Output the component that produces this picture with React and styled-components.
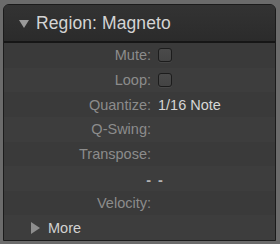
import React from "react";
import styled, { createGlobalStyle } from "styled-components";

/* -------------------------
   Data
   ------------------------- */
const rows = [
  { label: "Mute:", kind: "check" },
  { label: "Loop:", kind: "check" },
  { label: "Quantize:", value: "1/16 Note" },
  { label: "Q-Swing:" },
  { label: "Transpose:" },
  { label: "-", value: "-", dash: true },
  { label: "Velocity:" },
];

/* -------------------------
   Component
   ------------------------- */
const App = () => {
  return (
    <>
      <GlobalStyle />
      <Frame>
        <Panel>
          <Header>
            <DownArrow />
            <HeaderTitle>Region: Magneto</HeaderTitle>
          </Header>
          <Rows>
            {rows.map((r, i) => (
              <Row key={i} odd={i % 2 === 1}>
                <Label dash={r.dash}>{r.label}</Label>
                <Value dash={r.dash}>
                  {r.kind === "check" ? <Checkbox /> : r.value}
                </Value>
              </Row>
            ))}
            <MoreRow odd>
              <RightArrow />
              <MoreText>More</MoreText>
            </MoreRow>
          </Rows>
        </Panel>
      </Frame>
    </>
  );
};

/* -------------------------
   Styles
   ------------------------- */
const GlobalStyle = createGlobalStyle`
  html, body {
    margin: 0;
    padding: 0;
    background: #6b6b6b;
  }
  body {
    font-family: "Liberation Sans", Arial, sans-serif;
  }
`;

const Frame = styled.div`
  width: 280px;
  height: 244px;
  padding: 4px 4px 3px 3px;
  box-sizing: border-box;
  display: flex;
`;

const Panel = styled.div`
  flex: 1;
  display: flex;
  flex-direction: column;
  border: 1px solid #1b1b1b;
  border-radius: 6px 6px 0 0;
  overflow: hidden;
  background: #3b3b3b;
`;

const Header = styled.div`
  height: 36px;
  flex: 0 0 auto;
  display: flex;
  align-items: center;
  padding-left: 15px;
  gap: 7px;
  background: linear-gradient(#333333, #2b2b2b);
  border-bottom: 2px solid #161616;
`;

const DownArrow = styled.div`
  width: 0;
  height: 0;
  border-left: 5.5px solid transparent;
  border-right: 5.5px solid transparent;
  border-top: 8px solid #9a9a9a;
  margin-top: 1px;
`;

const HeaderTitle = styled.div`
  font-size: 17.5px;
  color: #d4d4d4;
  letter-spacing: 0.1px;
`;

const Rows = styled.div`
  flex: 1;
  display: grid;
  grid-template-rows: repeat(8, 1fr);
`;

const Row = styled.div`
  display: grid;
  grid-template-columns: 147px 1fr;
  column-gap: 7px;
  align-items: center;
  background: ${({ odd }) => (odd ? "#3d3d3d" : "#3a3a3a")};
  font-size: 14.5px;
`;

const Label = styled.div`
  text-align: right;
  color: ${({ dash }) => (dash ? "#b4b4b4" : "#8c8c8c")};
  ${({ dash }) => dash && "font-weight: bold; padding-top: 3px;"}
`;

const Value = styled.div`
  color: ${({ dash }) => (dash ? "#b4b4b4" : "#d6d6d6")};
  display: flex;
  align-items: center;
  ${({ dash }) => dash && "font-weight: bold; padding-top: 3px;"}
`;

const Checkbox = styled.div`
  width: 12px;
  height: 12px;
  border: 1px solid #1c1c1c;
  border-radius: 3px;
  background: linear-gradient(#4a4a4a, #444444);
  box-shadow: 0 1px 0 rgba(255, 255, 255, 0.06);
`;

const MoreRow = styled.div`
  display: flex;
  align-items: center;
  padding-left: 27px;
  gap: 8px;
  background: ${({ odd }) => (odd ? "#3d3d3d" : "#3a3a3a")};
`;

const RightArrow = styled.div`
  width: 0;
  height: 0;
  border-top: 6px solid transparent;
  border-bottom: 6px solid transparent;
  border-left: 9px solid #8e8e8e;
`;

const MoreText = styled.div`
  font-size: 14.5px;
  color: #d2d2d2;
`;

export default App;
